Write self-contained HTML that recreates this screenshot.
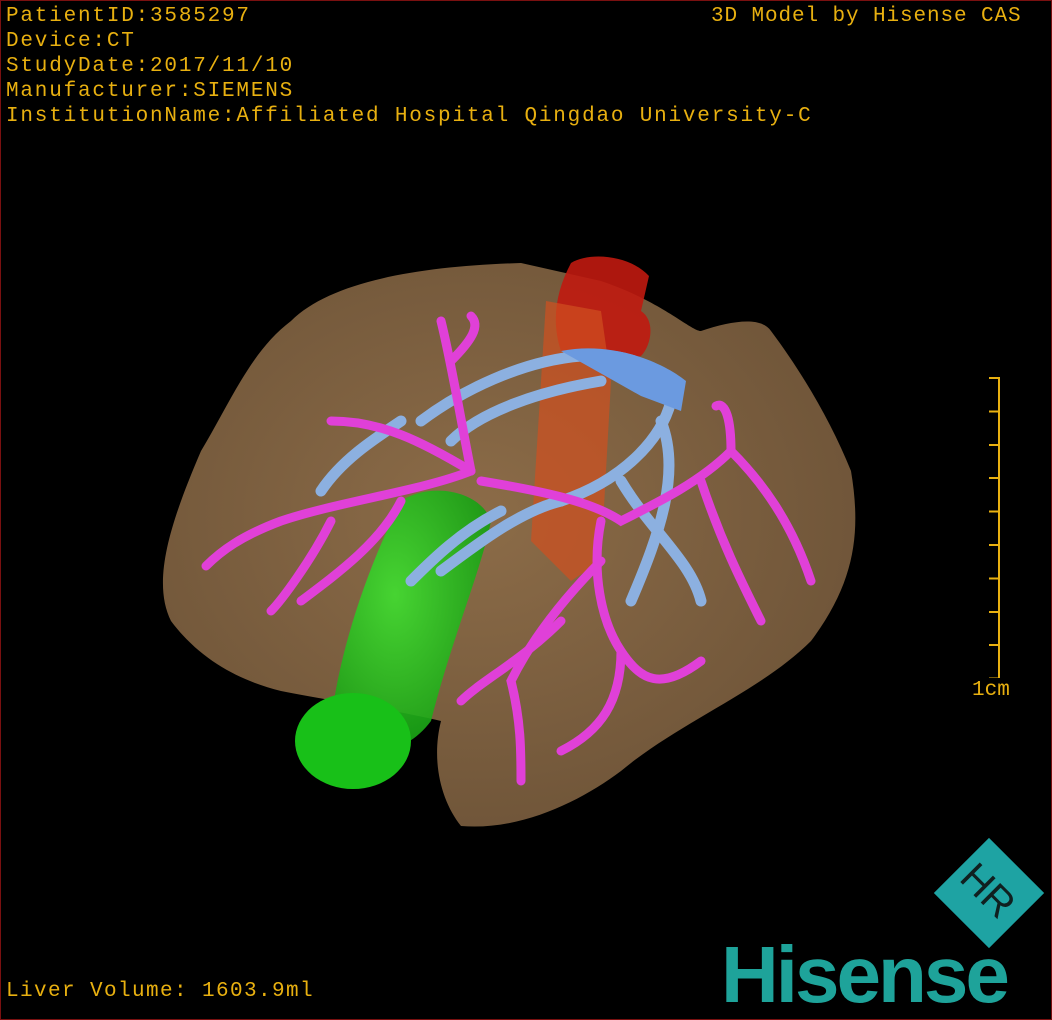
<!DOCTYPE html>
<html><head><meta charset="utf-8"><style>
html,body{margin:0;padding:0;background:#000;}
#w{position:relative;width:1050px;height:1018px;border:1px solid #7a1010;overflow:hidden;background:#000;}
.t{position:absolute;color:#e8b010;font-family:"Liberation Mono","DejaVu Sans Mono",monospace;font-size:21px;line-height:25px;white-space:pre;letter-spacing:1.8px}
</style></head><body><div id="w">
<svg width="1050" height="1018" style="position:absolute;left:0;top:0">
<defs>
<radialGradient id="lv" cx="45%" cy="45%" r="60%"><stop offset="0" stop-color="#8c6c48"/><stop offset="1" stop-color="#6e5438"/></radialGradient>
<radialGradient id="gr" cx="40%" cy="40%" r="70%"><stop offset="0" stop-color="#40e030"/><stop offset="1" stop-color="#129a10"/></radialGradient>
</defs>
<path d="M290 320 C330 280 420 265 520 262 L600 280 C660 300 690 330 700 330 C730 320 760 315 770 330 C800 370 830 420 850 470 C860 530 855 580 810 640 C760 690 680 720 620 770 C580 800 520 830 460 825 C440 800 430 760 440 720 C400 710 330 700 280 690 C240 680 200 660 170 620 C150 580 170 520 200 450 C230 400 250 350 290 320 Z" fill="url(#lv)"/>
<path d="M570 262 C590 250 630 255 648 275 L640 310 C655 320 650 345 640 355 L600 360 L560 350 C550 320 555 290 570 262Z" fill="#c01a10" opacity="0.9"/>
<path d="M545 300 L600 310 L610 380 L600 560 L570 580 L530 540 Z" fill="#d05020" opacity="0.7"/>
<path d="M400 500 C430 480 480 490 490 520 C480 570 450 640 430 720 C400 760 350 760 330 720 C340 640 370 560 400 500Z" fill="url(#gr)" opacity="0.9"/>
<ellipse cx="352" cy="740" rx="58" ry="48" fill="#18c018"/>
<g stroke="#8cb0e0" stroke-width="11" fill="none" stroke-linecap="round">
<path d="M420 420 C460 390 520 360 580 355 C630 350 670 370 670 400 C660 440 620 480 560 500"/>
<path d="M450 440 C480 410 540 390 600 380"/>
<path d="M660 420 C680 470 660 530 630 600"/>
<path d="M620 480 C650 530 690 560 700 600"/>
<path d="M500 510 C460 530 430 560 410 580"/>
<path d="M400 420 C370 440 340 460 320 490"/>
<path d="M560 500 C520 510 480 540 440 570"/>
</g>
<path d="M560 350 C610 340 660 360 685 380 L680 410 L640 395 Z" fill="#6b9ae0"/>
<g stroke="#e040d8" stroke-width="9" fill="none" stroke-linecap="round">
<path d="M470 470 C420 490 340 500 280 520 C240 535 220 550 205 565"/>
<path d="M470 470 C460 420 450 360 440 320"/>
<path d="M470 470 C420 440 380 420 330 420"/>
<path d="M480 480 C540 490 590 500 620 520 C660 500 700 480 730 450"/>
<path d="M600 520 C590 570 600 620 620 650 C640 680 660 690 700 660"/>
<path d="M600 560 C560 600 530 640 510 680 C520 720 520 750 520 780"/>
<path d="M730 450 C760 480 790 520 810 580"/>
<path d="M700 480 C720 540 740 580 760 620"/>
<path d="M560 620 C520 660 480 680 460 700"/>
<path d="M620 650 C620 700 600 730 560 750"/>
<path d="M330 520 C310 560 280 600 270 610"/>
<path d="M400 500 C380 540 340 570 300 600"/>
<path d="M450 360 C470 340 480 325 470 315"/>
<path d="M730 450 C730 420 725 400 715 405"/>
</g>
</svg>
<div class="t" style="left:5px;top:3px">PatientID:3585297
Device:CT
StudyDate:2017/11/10
Manufacturer:SIEMENS
InstitutionName:Affiliated Hospital Qingdao University-C</div>
<div class="t" style="left:710px;top:3px;letter-spacing:0.9px">3D Model by Hisense CAS</div>
<div class="t" style="left:5px;top:978px;letter-spacing:1.4px">Liver Volume: 1603.9ml</div>
<div style="position:absolute;left:997px;top:376px;width:2px;height:301px;background:#e8b010"></div>
<div style="position:absolute;left:988px;top:376px;width:10px;height:301px;background:repeating-linear-gradient(#e8b010 0 2px,transparent 2px 33.4px)"></div>
<div class="t" style="left:971px;top:677px;letter-spacing:0">1cm</div>
<div style="position:absolute;left:949px;top:853px;width:78px;height:78px;background:#1ea3a3;transform:rotate(-45deg);transform-origin:center;"><div style="position:absolute;left:0;top:14px;width:78px;text-align:center;font:40px 'Liberation Sans',sans-serif;color:#102020;transform:rotate(90deg)">HR</div></div>
<div style="position:absolute;left:720px;top:934px;font:bold 80px 'Liberation Sans',sans-serif;color:#1ea39a;letter-spacing:-3px;line-height:80px">Hisense</div>
</div></body></html>
